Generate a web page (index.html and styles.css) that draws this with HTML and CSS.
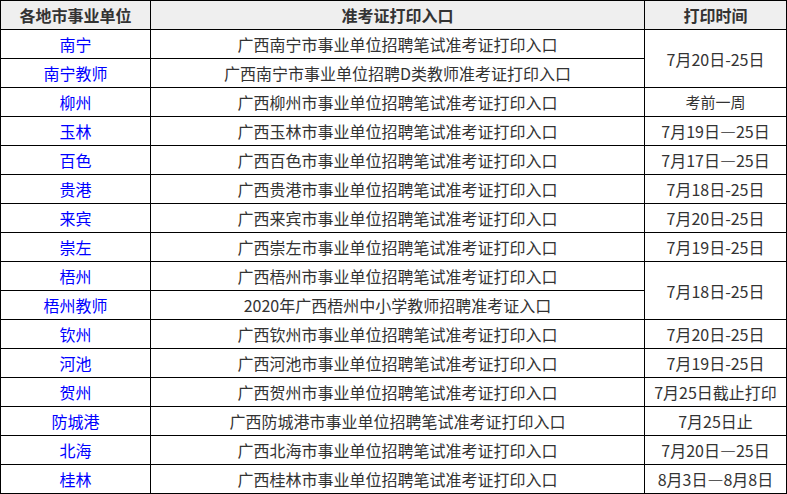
FILE: index.html
```html
<!DOCTYPE html>
<html lang="zh-CN">
<head>
<meta charset="utf-8">
<link rel="stylesheet" href="styles.css">
</head>
<body>
<table class="tbl">
  <colgroup>
    <col class="c1"><col class="c2"><col class="c3">
  </colgroup>
  <thead>
    <tr><th>各地市事业单位</th><th>准考证打印入口</th><th>打印时间</th></tr>
  </thead>
  <tbody>
    <tr><td class="city">南宁</td><td>广西南宁市事业单位招聘笔试准考证打印入口</td><td rowspan="2">7月20日-25日</td></tr>
    <tr><td class="city">南宁教师</td><td>广西南宁市事业单位招聘D类教师准考证打印入口</td></tr>
    <tr><td class="city">柳州</td><td>广西柳州市事业单位招聘笔试准考证打印入口</td><td class="small">考前一周</td></tr>
    <tr><td class="city">玉林</td><td>广西玉林市事业单位招聘笔试准考证打印入口</td><td>7月19日—25日</td></tr>
    <tr><td class="city">百色</td><td>广西百色市事业单位招聘笔试准考证打印入口</td><td>7月17日—25日</td></tr>
    <tr><td class="city">贵港</td><td>广西贵港市事业单位招聘笔试准考证打印入口</td><td>7月18日-25日</td></tr>
    <tr><td class="city">来宾</td><td>广西来宾市事业单位招聘笔试准考证打印入口</td><td>7月20日-25日</td></tr>
    <tr><td class="city">崇左</td><td>广西崇左市事业单位招聘笔试准考证打印入口</td><td>7月19日-25日</td></tr>
    <tr><td class="city">梧州</td><td>广西梧州市事业单位招聘笔试准考证打印入口</td><td rowspan="2">7月18日-25日</td></tr>
    <tr><td class="city">梧州教师</td><td>2020年广西梧州中小学教师招聘准考证入口</td></tr>
    <tr><td class="city">钦州</td><td>广西钦州市事业单位招聘笔试准考证打印入口</td><td>7月20日-25日</td></tr>
    <tr><td class="city">河池</td><td>广西河池市事业单位招聘笔试准考证打印入口</td><td>7月19日-25日</td></tr>
    <tr><td class="city">贺州</td><td>广西贺州市事业单位招聘笔试准考证打印入口</td><td>7月25日截止打印</td></tr>
    <tr><td class="city">防城港</td><td>广西防城港市事业单位招聘笔试准考证打印入口</td><td>7月25日止</td></tr>
    <tr><td class="city">北海</td><td>广西北海市事业单位招聘笔试准考证打印入口</td><td>7月20日—25日</td></tr>
    <tr><td class="city">桂林</td><td>广西桂林市事业单位招聘笔试准考证打印入口</td><td>8月3日—8月8日</td></tr>
  </tbody>
</table>
</body>
</html>
```
FILE: styles.css
```css
html, body {
  margin: 0;
  padding: 0;
  background: #fff;
}
body {
  font-family: "Noto Sans CJK SC", "Microsoft YaHei", sans-serif;
  color: #333;
}
.tbl {
  border-collapse: collapse;
  table-layout: fixed;
  width: 786px;
  font-size: 16px;
}
.c1 { width: 150px; }
.c2 { width: 494px; }
.c3 { width: 142px; }
.tbl th,
.tbl td {
  border: 1px solid #000;
  height: 28px;
  padding: 0;
  text-align: center;
  vertical-align: middle;
  line-height: 20px;
  white-space: nowrap;
}
.tbl th {
  background: #efefef;
  font-weight: bold;
  color: #333;
}
.tbl td.city {
  color: #0000ff;
}
.tbl td.small {
  font-size: 15px;
}
```
